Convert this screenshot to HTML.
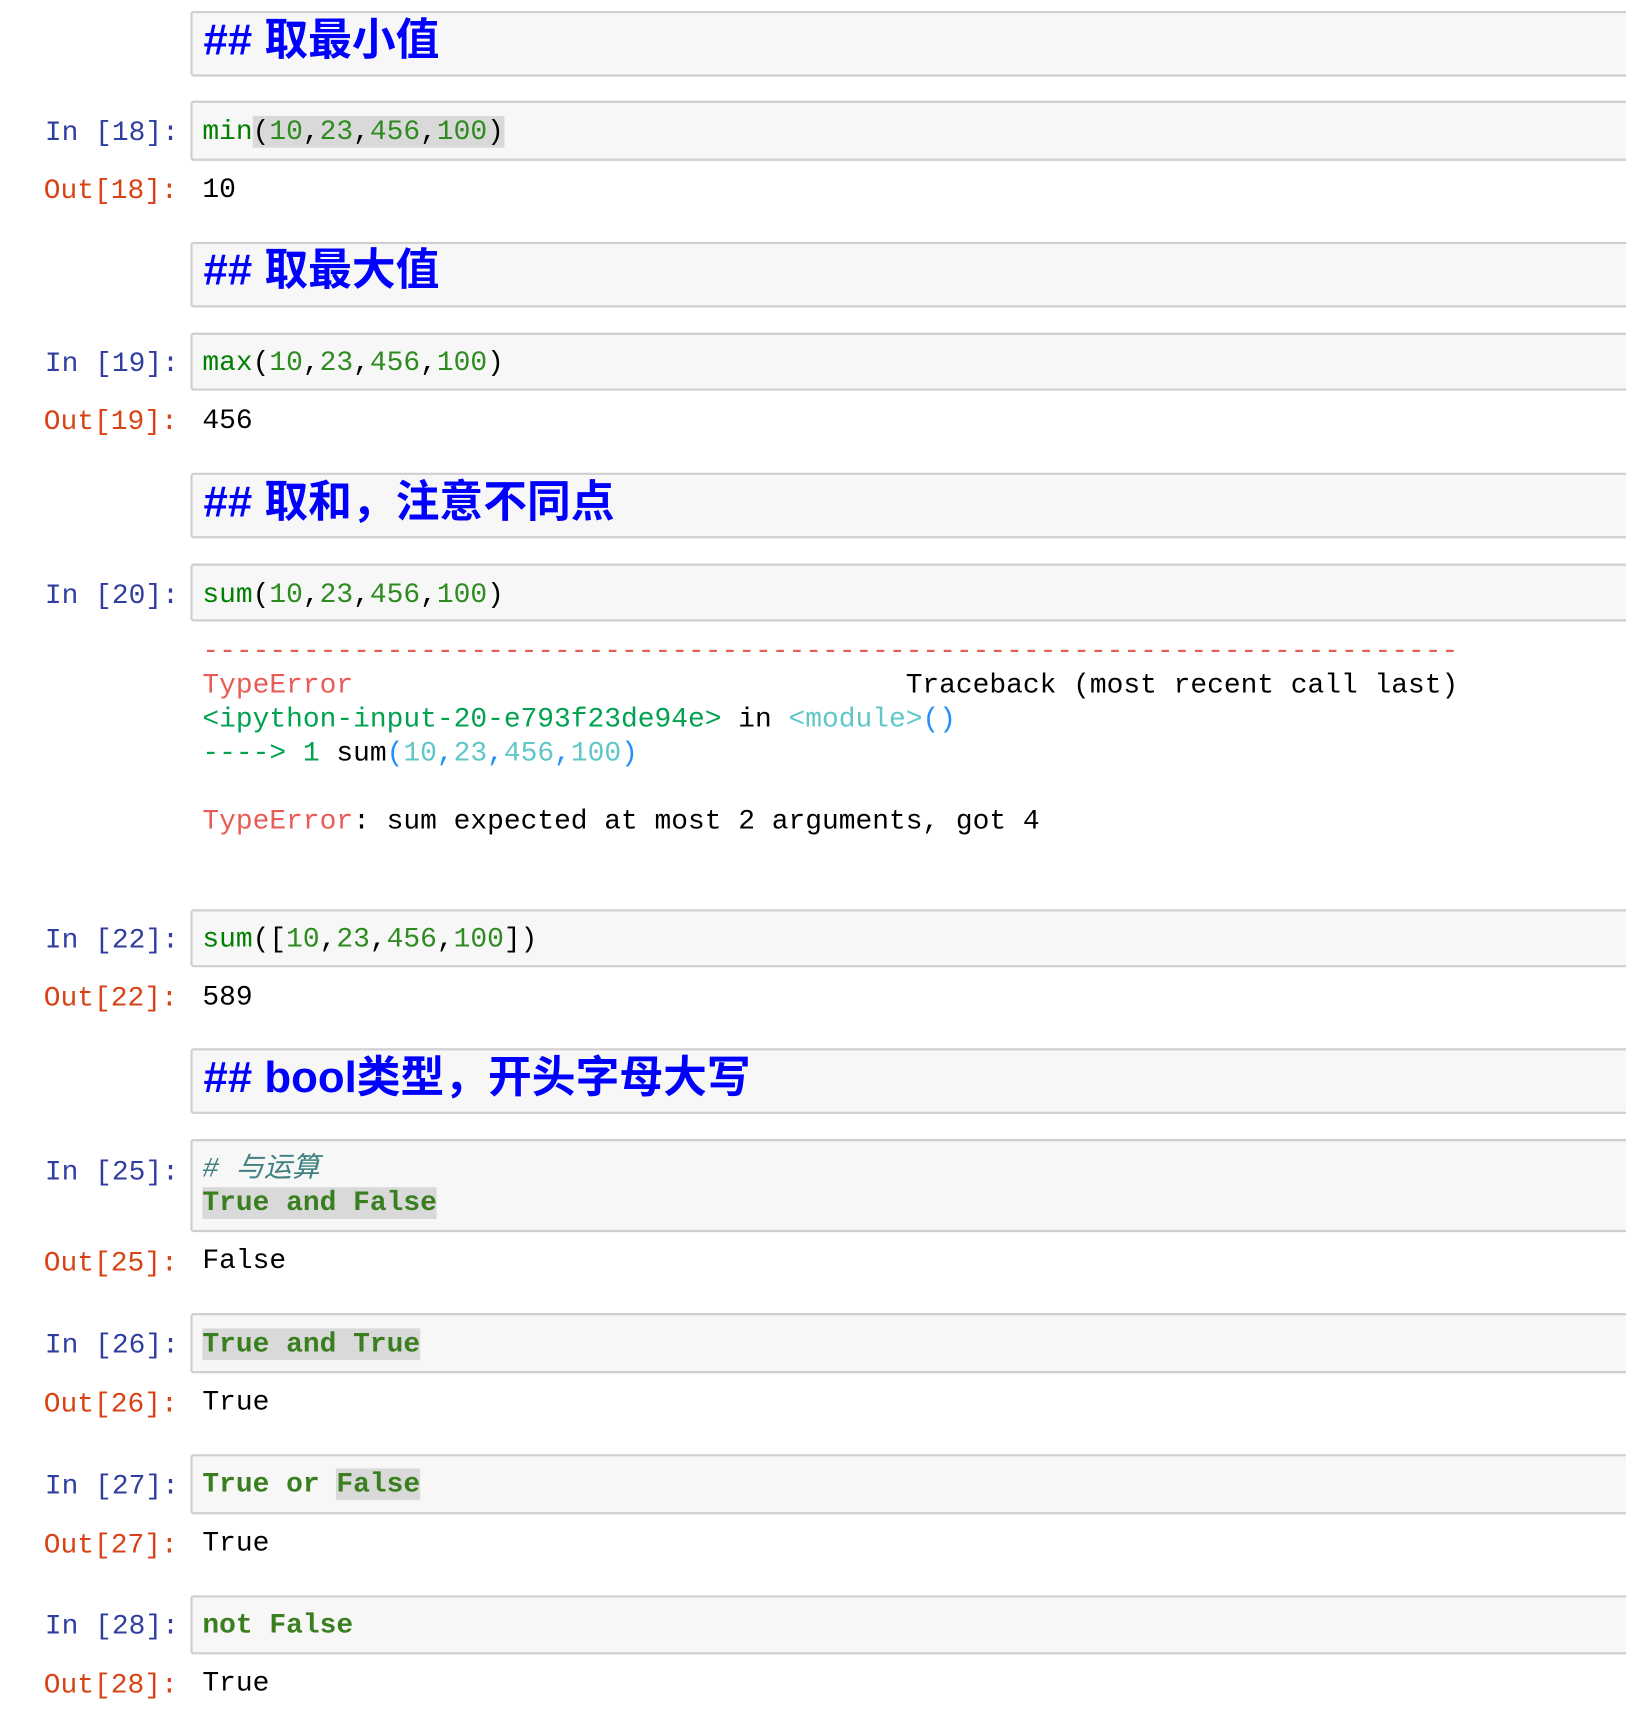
<!DOCTYPE html>
<html><head><meta charset="utf-8"><style>
html,body{margin:0;padding:0;background:#fff;overflow:hidden;width:1626px;height:1716px}
#w{position:absolute;left:0;top:0;width:1486px;height:1568px;transform:scale(1.0942);transform-origin:0 0}
.box{position:absolute;left:174px;width:1330px;background:#f7f7f7;border:2px solid #cfcfcf;border-radius:3px;box-sizing:border-box}
.t{position:absolute;white-space:pre;font-family:"Liberation Mono","Noto Sans CJK SC",monospace;font-size:25.5px;height:31px;line-height:31px}
.p{left:41px;color:#303f9f}
.o{left:40px;color:#d84315}
.c{left:185px}
.h{position:absolute;left:186px;white-space:pre;font-family:"Liberation Sans","Noto Sans CJK SC",sans-serif;font-weight:bold;font-size:40px;color:#0000ff;height:50px;line-height:50px}
.g{color:#008000}.n{color:#2e8b20}.k{color:#3a7f1f;font-weight:bold}
.hl{background:#d9d9d9}
.er{color:#e75c58}.eg{color:#00a250}.ec{color:#60c6c8}.eb{color:#208ffb}
.cm{color:#408080;font-style:italic}
</style></head><body><div id="w">
<div class="box" style="top:10px;height:60px"></div><div class="h" style="top:12px">## 取最小值</div>
<div class="box" style="top:92px;height:55px"></div>
<div class="t p" style="top:106px">In [18]:</div>
<div class="t c" style="top:105px"><span class="g">min</span><span class="hl">(<span class="n">10</span>,<span class="n">23</span>,<span class="n">456</span>,<span class="n">100</span>)</span></div>
<div class="t o" style="top:159px">Out[18]:</div><div class="t c" style="top:158px">10</div>

<div class="box" style="top:221px;height:60px"></div><div class="h" style="top:222px">## 取最大值</div>
<div class="box" style="top:304px;height:53px"></div>
<div class="t p" style="top:317px">In [19]:</div>
<div class="t c" style="top:316px"><span class="g">max</span>(<span class="n">10</span>,<span class="n">23</span>,<span class="n">456</span>,<span class="n">100</span>)</div>
<div class="t o" style="top:370px">Out[19]:</div><div class="t c" style="top:369px">456</div>

<div class="box" style="top:432px;height:60px"></div><div class="h" style="top:434px">## 取和，注意不同点</div>
<div class="box" style="top:515px;height:53px"></div>
<div class="t p" style="top:529px">In [20]:</div>
<div class="t c" style="top:528px"><span class="g">sum</span>(<span class="n">10</span>,<span class="n">23</span>,<span class="n">456</span>,<span class="n">100</span>)</div>
<div class="t c er" style="top:580px">---------------------------------------------------------------------------</div>
<div class="t c" style="top:611px"><span class="er">TypeError</span>                                 Traceback (most recent call last)</div>
<div class="t c" style="top:642px"><span class="eg">&lt;ipython-input-20-e793f23de94e&gt;</span> in <span class="ec">&lt;module&gt;</span><span class="eb">()</span></div>
<div class="t c" style="top:673px"><span class="eg">----&gt; 1</span> sum<span class="eb">(</span><span class="ec">10</span><span class="eb">,</span><span class="ec">23</span><span class="eb">,</span><span class="ec">456</span><span class="eb">,</span><span class="ec">100</span><span class="eb">)</span></div>
<div class="t c" style="top:735px"><span class="er">TypeError</span>: sum expected at most 2 arguments, got 4</div>

<div class="box" style="top:831px;height:53px"></div>
<div class="t p" style="top:844px">In [22]:</div>
<div class="t c" style="top:843px"><span class="g">sum</span>([<span class="n">10</span>,<span class="n">23</span>,<span class="n">456</span>,<span class="n">100</span>])</div>
<div class="t o" style="top:897px">Out[22]:</div><div class="t c" style="top:896px">589</div>

<div class="box" style="top:958px;height:60px"></div><div class="h" style="top:960px">## bool类型，开头字母大写</div>
<div class="box" style="top:1041px;height:85px"></div>
<div class="t p" style="top:1056px">In [25]:</div>
<div class="t c cm" style="top:1053px"># 与运算</div>
<div class="t c" style="top:1084px"><span class="hl"><span class="k">True</span> <span class="k">and</span> <span class="k">False</span></span></div>
<div class="t o" style="top:1139px">Out[25]:</div><div class="t c" style="top:1137px">False</div>

<div class="box" style="top:1200px;height:55px"></div>
<div class="t p" style="top:1214px">In [26]:</div>
<div class="t c" style="top:1213px"><span class="hl"><span class="k">True</span> <span class="k">and</span> <span class="k">True</span></span></div>
<div class="t o" style="top:1268px">Out[26]:</div><div class="t c" style="top:1266px">True</div>

<div class="box" style="top:1329px;height:55px"></div>
<div class="t p" style="top:1343px">In [27]:</div>
<div class="t c" style="top:1341px"><span class="k">True</span> <span class="k">or</span> <span class="hl k">False</span></div>
<div class="t o" style="top:1397px">Out[27]:</div><div class="t c" style="top:1395px">True</div>

<div class="box" style="top:1458px;height:54px"></div>
<div class="t p" style="top:1471px">In [28]:</div>
<div class="t c" style="top:1470px"><span class="k">not</span> <span class="k">False</span></div>
<div class="t o" style="top:1525px">Out[28]:</div><div class="t c" style="top:1523px">True</div>
</div></body></html>
